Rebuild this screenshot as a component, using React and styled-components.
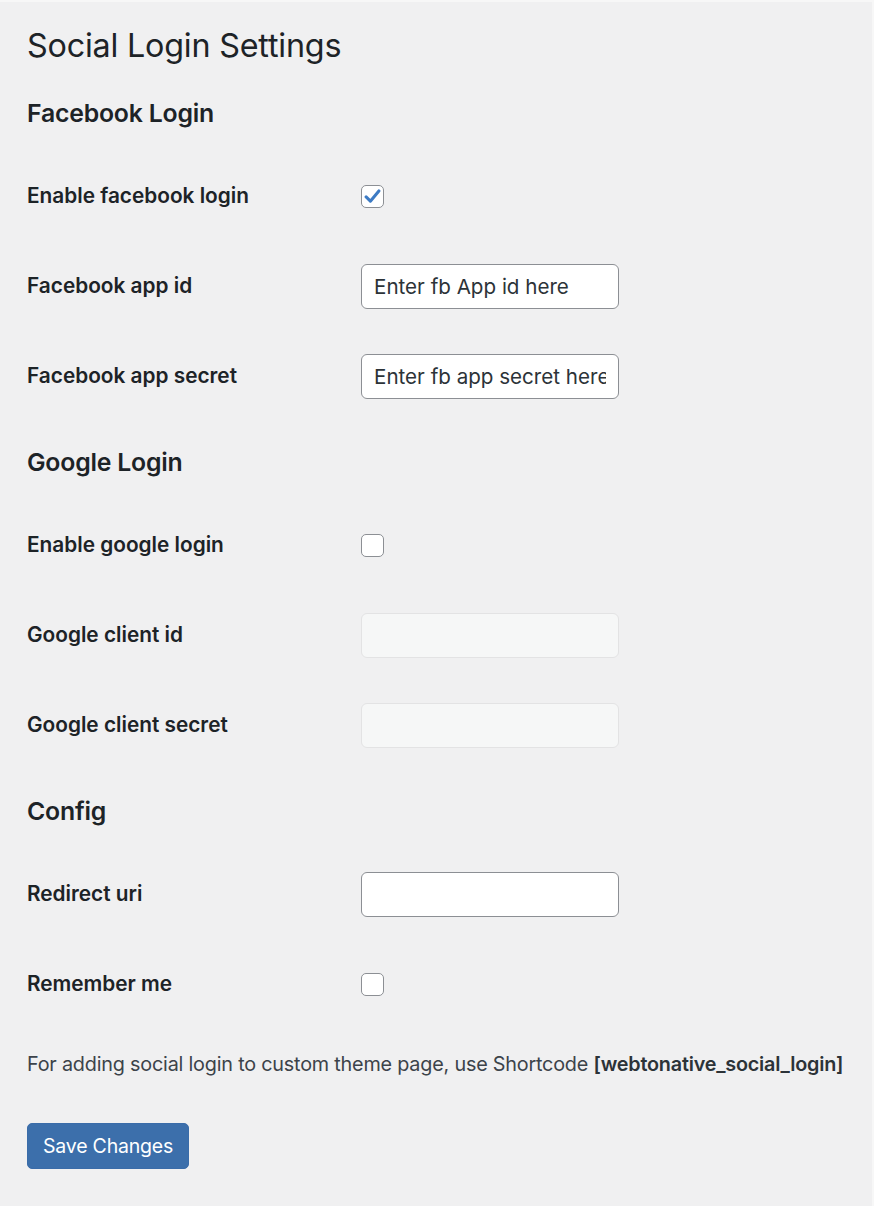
import React from 'react';
import styled, { createGlobalStyle } from 'styled-components';

const Global = createGlobalStyle`
  html, body {
    margin: 0;
    padding: 0;
    background: #f0f0f1;
  }
  body {
    font-family: Inter, "Noto Sans", "Liberation Sans", sans-serif;
    color: #1d2327;
  }
`;

const Wrap = styled.div`
  box-sizing: border-box;
  width: 874px;
  min-height: 1206px;
  padding: 24px 0 0 27px;
  border-top: 2px solid #f7f7f7;
  border-right: 2px solid #f7f7f7;
`;

const Title = styled.h1`
  margin: 0;
  font-size: 32.3px;
  font-weight: 400;
  line-height: 40px;
  letter-spacing: -0.2px;
`;

const SectionTitle = styled.h2`
  margin: ${p => (p.first ? '30px' : '24px')} 0 21px;
  font-size: 24.8px;
  font-weight: 600;
  line-height: 34px;
  letter-spacing: -0.2px;
`;

const Row = styled.div`
  display: flex;
  align-items: center;
  height: 90px;
`;

const Label = styled.label`
  width: 334px;
  flex-shrink: 0;
  font-size: 20.8px;
  font-weight: 600;
  line-height: 28px;
`;

const Input = styled.input`
  box-sizing: border-box;
  width: 258px;
  height: 45px;
  padding: 0 12px;
  border: 1.5px solid ${p => (p.disabled ? '#e3e3e4' : '#8c8f94')};
  border-radius: 6px;
  background: ${p => (p.disabled ? '#f6f7f7' : '#fff')};
  font-family: inherit;
  font-size: 20.6px;
  color: #2c3338;
  outline: none;
  &::placeholder {
    color: #2c3338;
    opacity: 1;
  }
`;

const Box = styled.span`
  box-sizing: border-box;
  display: inline-flex;
  align-items: center;
  justify-content: center;
  width: 23px;
  height: 23px;
  border: 1.5px solid #8c8f94;
  border-radius: 5px;
  background: #fff;
`;

const Note = styled.p`
  margin: 20px 0 0;
  font-size: 19.8px;
  line-height: 30px;
  color: #3c434a;
  letter-spacing: -0.2px;
  b {
    color: #2c3338;
    font-weight: 600;
  }
`;

const Button = styled.button`
  margin-top: 44px;
  height: 46px;
  padding: 0 15px;
  border: 1px solid #3a6ca9;
  border-radius: 5px;
  background: #3c6fab;
  color: #fff;
  font-family: inherit;
  font-size: 19.5px;
  letter-spacing: -0.2px;
`;

function Check({ checked }) {
  return (
    <Box>
      {checked && (
        <svg width="17" height="17" viewBox="0 0 20 20">
          <path d="M2.5 10.5 L7.5 15.5 L17.5 3.5" fill="none" stroke="#3d7bc4" strokeWidth="3.6" strokeLinecap="round" strokeLinejoin="round" />
        </svg>
      )}
    </Box>
  );
}

export default function App() {
  return (
    <Wrap>
      <Global />
      <Title>Social Login Settings</Title>

      <SectionTitle first>Facebook Login</SectionTitle>
      <Row>
        <Label>Enable facebook login</Label>
        <Check checked />
      </Row>
      <Row>
        <Label>Facebook app id</Label>
        <Input placeholder="Enter fb App id here" />
      </Row>
      <Row>
        <Label>Facebook app secret</Label>
        <Input placeholder="Enter fb app secret here" />
      </Row>

      <SectionTitle>Google Login</SectionTitle>
      <Row>
        <Label>Enable google login</Label>
        <Check />
      </Row>
      <Row>
        <Label>Google client id</Label>
        <Input disabled />
      </Row>
      <Row>
        <Label>Google client secret</Label>
        <Input disabled />
      </Row>

      <SectionTitle>Config</SectionTitle>
      <Row>
        <Label>Redirect uri</Label>
        <Input />
      </Row>
      <Row>
        <Label>Remember me</Label>
        <Check />
      </Row>

      <Note>
        For adding social login to custom theme page, use Shortcode <b>[webtonative_social_login]</b>
      </Note>
      <Button>Save Changes</Button>
    </Wrap>
  );
}
